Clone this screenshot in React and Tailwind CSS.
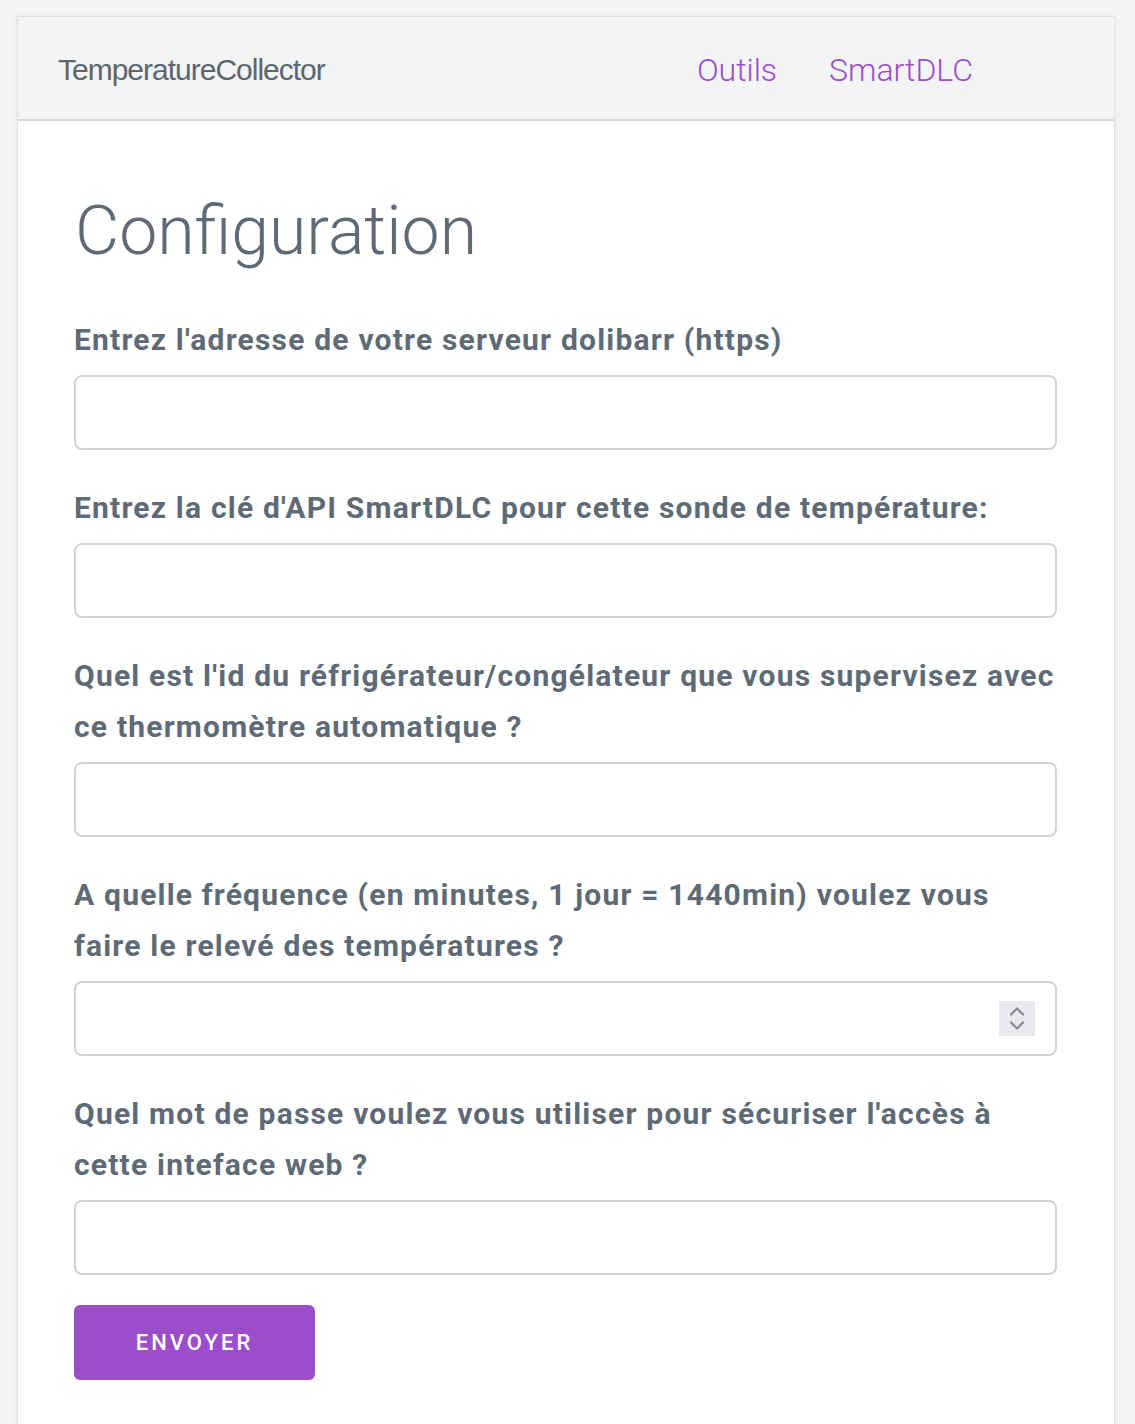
import React from 'react';

const labelCls = "block -mr-[8px] text-[30px] leading-[51px] font-bold tracking-[1.2px] text-[#5e6a75]";
const boxCls = "w-full h-[75px] rounded-[8px] border-2 border-[#d3d3d3] bg-white";

const Field = ({ label, children }) => (
  <div className="mb-[32px]">
    <label className={labelCls}>{label}</label>
    <div className="mt-[10px]">{children}</div>
  </div>
);

const App = () => {
  return (
    <div className="min-h-screen bg-[#f4f4f4] pt-[16px]" style={{ fontFamily: 'Roboto, "Noto Sans", sans-serif' }}>
      <div className="ml-[17px] w-[1098px] min-h-[1420px] bg-white border border-[#e0e0e0] shadow-[0_0_6px_rgba(0,0,0,0.06)]">
        {/* header */}
        <div className="h-[104px] bg-[#f3f4f6] border-b-2 border-[#d9d9d9] flex items-center pl-[40px] pr-[141px] pt-[3px]">
          <span className="text-[30px] tracking-[-1px] text-[#5b666f]" style={{ fontFamily: '"Liberation Sans", Arial, sans-serif' }}>
            TemperatureCollector
          </span>
          <nav className="ml-auto flex gap-[52px] text-[32px] font-light text-[#9b4dca]">
            <a href="#">Outils</a>
            <a href="#">SmartDLC</a>
          </nav>
        </div>

        {/* form */}
        <div className="pl-[56px] pr-[57px] pt-[62px]">
          <h1 className="pl-[1px] text-[68px] leading-[96px] font-light text-[#5e6a75] mb-[35px]">Configuration</h1>

          <Field label="Entrez l'adresse de votre serveur dolibarr (https)">
            <input type="text" className={boxCls + " px-4 outline-none"} />
          </Field>

          <Field label="Entrez la clé d'API SmartDLC pour cette sonde de température:">
            <input type="text" className={boxCls + " px-4 outline-none"} />
          </Field>

          <Field label="Quel est l'id du réfrigérateur/congélateur que vous supervisez avec ce thermomètre automatique ?">
            <input type="text" className={boxCls + " px-4 outline-none"} />
          </Field>

          <Field label="A quelle fréquence (en minutes, 1 jour = 1440min) voulez vous faire le relevé des températures ?">
            <div className={boxCls + " flex items-center pr-[20px]"}>
              <input type="text" className="flex-1 h-full px-4 outline-none bg-transparent" />
              <div className="w-[36px] h-[35px] bg-[#e9e9ee] flex flex-col items-center justify-center gap-[5px]">
                <svg width="16" height="9" viewBox="0 0 16 9" fill="none" stroke="#86869a" strokeWidth="2.2" strokeLinecap="round" strokeLinejoin="round">
                  <path d="M2 7.5l6-6 6 6" />
                </svg>
                <svg width="16" height="9" viewBox="0 0 16 9" fill="none" stroke="#86869a" strokeWidth="2.2" strokeLinecap="round" strokeLinejoin="round">
                  <path d="M2 1.5l6 6 6-6" />
                </svg>
              </div>
            </div>
          </Field>

          <Field label="Quel mot de passe voulez vous utiliser pour sécuriser l'accès à cette inteface web ?">
            <input type="password" className={boxCls + " px-4 outline-none"} />
          </Field>

          <button className="-mt-[2px] w-[241px] h-[75px] rounded-[6px] bg-[#9b4dca] text-white text-[22px] font-medium tracking-[3px]">
            ENVOYER
          </button>
        </div>
      </div>
    </div>
  );
};

export default App;
